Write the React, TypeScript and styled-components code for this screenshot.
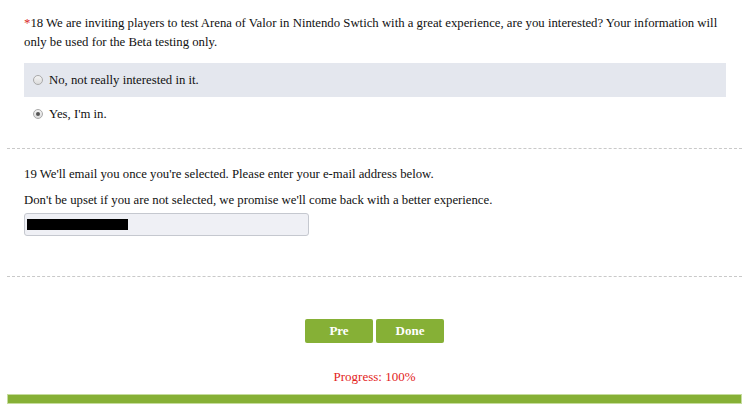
import React from "react";
import styled, { createGlobalStyle } from "styled-components";

const GlobalStyle = createGlobalStyle`
  html, body { margin: 0; padding: 0; background: #fff; }
  body { font-family: "Liberation Serif", "Times New Roman", serif; color: #111; }
`;

const Page = styled.div`
  width: 750px;
  padding: 0 8px 0 7px;
  box-sizing: border-box;
`;

const Question = styled.div<{ $pb: number; $pt: number }>`
  padding: ${p => p.$pt}px 17px ${p => p.$pb}px;
  border-bottom: 1px dashed #c9c9c9;
`;

const Title = styled.div`
  font-size: 12.75px;
  line-height: 19px;
`;

const Star = styled.span`
  color: #d9261c;
`;

const Options = styled.div`
  margin-top: 11px;
  margin-right: -1px;
`;

const Option = styled.label<{ $shaded?: boolean }>`
  display: flex;
  align-items: center;
  height: 34px;
  padding-left: 9px;
  font-size: 12.75px;
  background: ${p => (p.$shaded ? "#e4e7ee" : "transparent")};
`;

const Radio = styled.span<{ $checked?: boolean }>`
  position: relative;
  width: 8px;
  height: 8px;
  border-radius: 50%;
  border: 1px solid #a9a9a9;
  background: linear-gradient(#f4f4f4, #dcdcdc);
  margin-right: 6px;
  flex: none;
  &::after {
    content: "";
    display: ${p => (p.$checked ? "block" : "none")};
    position: absolute;
    left: 2px;
    top: 2px;
    width: 4px;
    height: 4px;
    border-radius: 50%;
    background: #555;
  }
`;

const Desc = styled.div`
  font-size: 12.75px;
  line-height: 19px;
  margin-top: 7px;
`;

const Input = styled.div`
  margin-top: 3px;
  width: 285px;
  height: 23px;
  box-sizing: border-box;
  border: 1px solid #c5c8cf;
  border-radius: 3px;
  background: #eff0f5;
  padding: 5px 2px;
`;

const Redacted = styled.div`
  width: 101px;
  height: 11px;
  background: #000;
`;

const Buttons = styled.div`
  display: flex;
  justify-content: center;
  gap: 3px;
  margin-top: 42px;
`;

const Button = styled.button`
  width: 68px;
  height: 24px;
  border: none;
  border-radius: 2px;
  background: #86b036;
  color: #fff;
  font-family: "Liberation Serif", serif;
  font-weight: bold;
  font-size: 13px;
  padding: 0;
`;

const Progress = styled.div`
  text-align: center;
  color: #e3231c;
  font-family: "Liberation Serif", serif;
  font-size: 13px;
  line-height: 16px;
  margin-top: 26px;
`;

const Bar = styled.div`
  margin-top: 9px;
  height: 10px;
  box-sizing: border-box;
  background: #86b036;
  border: 1px solid #c6dc9e;
`;

export default function App() {
  return (
    <Page>
      <GlobalStyle />
      <Question $pt={14} $pb={17}>
        <Title>
          <Star>*</Star>18 We are inviting players to test Arena of Valor in Nintendo Swtich with a great
          experience, are you interested? Your information will only be used for the Beta testing only.
        </Title>
        <Options>
          <Option $shaded>
            <Radio />
            No, not really interested in it.
          </Option>
          <Option>
            <Radio $checked />
            Yes, I'm in.
          </Option>
        </Options>
      </Question>
      <Question $pt={16} $pb={40}>
        <Title>19 We'll email you once you're selected. Please enter your e-mail address below.</Title>
        <Desc>Don't be upset if you are not selected, we promise we'll come back with a better experience.</Desc>
        <Input>
          <Redacted />
        </Input>
      </Question>
      <Buttons>
        <Button>Pre</Button>
        <Button>Done</Button>
      </Buttons>
      <Progress>Progress: 100%</Progress>
      <Bar />
    </Page>
  );
}
